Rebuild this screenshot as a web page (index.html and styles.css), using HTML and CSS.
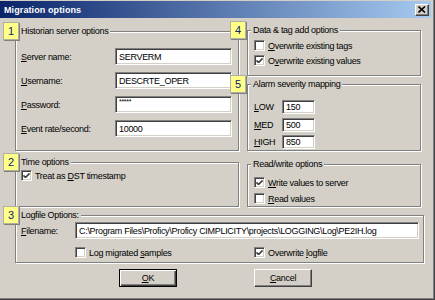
FILE: index.html
```html
<!DOCTYPE html>
<html lang="en">
<head>
    <meta charset="UTF-8">
    <title>Migration options</title>
    <link rel="stylesheet" href="styles.css">
</head>
<body>
    <div class="window">
        <div class="titlebar">
            <span class="title">Migration options</span>
            <span class="close">
                <svg width="8" height="7" viewBox="0 0 8 7"><path d="M0.5 0.5 L7 6.5 M7 0.5 L0.5 6.5" stroke="#000" stroke-width="1.6" fill="none"/></svg>
            </span>
        </div>

        <div class="client">
            <div class="columns">
                <div class="col">
                    <div class="group g-server">
                        <span class="badge">1</span>
                        <span class="legend">Historian server options</span>
                        <div class="fields">
                            <div class="row"><label><u>S</u>erver name:</label><span class="edit edit-wide">SERVERM</span></div>
                            <div class="row"><label><u>U</u>sername:</label><span class="edit edit-wide">DESCRTE_OPER</span></div>
                            <div class="row"><label><u>P</u>assword:</label><span class="edit edit-wide"><span class="mask">*****</span></span></div>
                            <div class="row"><label><u>E</u>vent rate/second:</label><span class="edit edit-wide">10000</span></div>
                        </div>
                    </div>
                    <div class="group g-time">
                        <span class="badge">2</span>
                        <span class="legend">Time options</span>
                        <div class="checks">
                            <div class="check-row"><span class="cb"><svg width="7" height="7" viewBox="0 0 7 7"><path d="M0.5 3 L2.5 5 L6.5 1 M0.5 4 L2.5 6 L6.5 2" stroke="#000" fill="none"/></svg></span><span>Treat as <u>D</u>ST timestamp</span></div>
                        </div>
                    </div>
                </div>

                <div class="col col-right">
                    <div class="group g-tags">
                        <span class="badge badge-r">4</span>
                        <span class="legend">Data &amp; tag add options</span>
                        <div class="checks checks-tags">
                            <div class="check-row"><span class="cb"></span><span><u>O</u>verwrite existing tags</span></div>
                            <div class="check-row"><span class="cb"><svg width="7" height="7" viewBox="0 0 7 7"><path d="M0.5 3 L2.5 5 L6.5 1 M0.5 4 L2.5 6 L6.5 2" stroke="#000" fill="none"/></svg></span><span>O<u>v</u>erwrite existing values</span></div>
                        </div>
                    </div>
                    <div class="group g-alarm">
                        <span class="badge badge-r">5</span>
                        <span class="legend">Alarm severity mapping</span>
                        <div class="levels">
                            <div class="row"><label class="lvl"><u>L</u>OW</label><span class="edit edit-small">150</span></div>
                            <div class="row"><label class="lvl"><u>M</u>ED</label><span class="edit edit-small">500</span></div>
                            <div class="row"><label class="lvl"><u>H</u>IGH</label><span class="edit edit-small">850</span></div>
                        </div>
                    </div>
                    <div class="group g-rw">
                        <span class="legend">Read/write options</span>
                        <div class="checks checks-rw">
                            <div class="check-row"><span class="cb"><svg width="7" height="7" viewBox="0 0 7 7"><path d="M0.5 3 L2.5 5 L6.5 1 M0.5 4 L2.5 6 L6.5 2" stroke="#000" fill="none"/></svg></span><span><u>W</u>rite values to server</span></div>
                            <div class="check-row"><span class="cb"></span><span><u>R</u>ead values</span></div>
                        </div>
                    </div>
                </div>
            </div>

            <div class="group g-log">
                <span class="badge">3</span>
                <span class="legend">Logfile Options:</span>
                <div class="log-body">
                    <div class="row"><label class="file-label"><u>F</u>ilename:</label><span class="edit edit-path">C:\Program Files\Proficy\Proficy CIMPLICITY\projects\LOGGING\Log\PE2IH.log</span></div>
                    <div class="log-checks">
                        <div class="check-row check-first"><span class="cb"></span><span>Log migrated <u>s</u>amples</span></div>
                        <div class="check-row"><span class="cb"><svg width="7" height="7" viewBox="0 0 7 7"><path d="M0.5 3 L2.5 5 L6.5 1 M0.5 4 L2.5 6 L6.5 2" stroke="#000" fill="none"/></svg></span><span>Overwrite <u>l</u>ogfile</span></div>
                    </div>
                </div>
            </div>

            <div class="buttons">
                <button class="btn btn-default"><u>O</u>K</button>
                <button class="btn"><u>C</u>ancel</button>
            </div>
        </div>
    </div>
</body>
</html>
```

FILE: styles.css
```css
body {
    margin: 0;
    background: #d4d0c8;
    font-family: "Liberation Sans", Arial, sans-serif;
    font-size: 9px;
    letter-spacing: -0.3px;
    color: #000;
}

.window {
    width: 435px;
    height: 300px;
    box-sizing: border-box;
    padding-top: 1px;
    border-right: 1px solid #404040;
    border-bottom: 1px solid #404040;
    box-shadow: inset -1px -1px 0 #808080;
    overflow: hidden;
}

.titlebar {
    height: 17px;
    margin-right: 3px;
    padding: 0 2px 0 4px;
    display: flex;
    align-items: center;
    justify-content: space-between;
    background: linear-gradient(to right, #0a246a, #a6caf0);
}

.title {
    color: #fff;
    font-weight: bold;
    font-size: 9px;
    letter-spacing: 0.1px;
}

.close {
    width: 14px;
    height: 12px;
    box-sizing: border-box;
    display: flex;
    align-items: center;
    justify-content: center;
    background: #d4d0c8;
    border: 1px solid;
    border-color: #fff #404040 #404040 #fff;
    box-shadow: inset -1px -1px 0 #808080;
}

.client {
    padding: 13px 0 0 15px;
}

.columns {
    display: grid;
    grid-template-columns: 224px 174px;
    column-gap: 8px;
    align-items: start;
}

.col {
    display: flex;
    flex-direction: column;
}

.col-right {
    margin-top: -1px;
}

/* etched group frame */
.group {
    position: relative;
    box-sizing: border-box;
    border: 1px solid #808080;
    box-shadow: inset 1px 1px 0 #fff, 1px 1px 0 #fff;
}

.legend {
    display: block;
    width: fit-content;
    margin: -7px 0 0 3px;
    padding: 0 2px;
    line-height: 12px;
    background: #d4d0c8;
}

.badge {
    position: absolute;
    top: -10px;
    left: -13px;
    width: 16px;
    height: 18px;
    box-sizing: border-box;
    display: flex;
    align-items: center;
    justify-content: center;
    background: #ffff88;
    border: 1px solid #b0b0a0;
    box-shadow: 1px 1px 0 #808080;
    color: #0a246a;
    font-size: 11px;
    letter-spacing: 0;
}

.badge-r {
    left: -18px;
}

.g-server { height: 120px; }
.g-time { height: 45px; margin-top: 11px; }
.g-tags { height: 46px; }
.g-alarm { height: 67px; margin-top: 8px; }
.g-rw { height: 43px; margin-top: 13px; }
.g-log { width: 409px; height: 48px; margin-top: 8px; }

.row {
    display: flex;
    align-items: center;
}

.fields {
    display: flex;
    flex-direction: column;
    gap: 7px;
    padding: 11px 0 0 5px;
}

.fields label {
    width: 94px;
}

.edit {
    box-sizing: border-box;
    height: 17px;
    padding: 0 3px;
    display: flex;
    align-items: center;
    background: #fff;
    border: 1px solid;
    border-color: #808080 #fff #fff #808080;
    box-shadow: inset 1px 1px 0 #404040, inset -1px -1px 0 #d4d0c8;
    white-space: nowrap;
    overflow: hidden;
}

.edit-wide { width: 117px; }

.mask {
    align-self: flex-start;
    font-size: 7px;
    line-height: 9px;
}

.checks {
    display: flex;
    flex-direction: column;
    padding: 1px 0 0 5px;
}

.checks-tags {
    padding: 3px 0 0 6px;
    gap: 2px;
}

.checks-rw {
    padding: 6px 0 0 6px;
    gap: 3px;
}

.check-row {
    display: flex;
    align-items: center;
    gap: 3px;
    height: 13px;
    white-space: nowrap;
}

.cb {
    width: 11px;
    height: 11px;
    box-sizing: border-box;
    flex: none;
    display: flex;
    align-items: center;
    justify-content: center;
    background: #fff;
    border: 1px solid;
    border-color: #808080 #fff #fff #808080;
    box-shadow: inset 1px 1px 0 #404040, inset -1px -1px 0 #d4d0c8;
}

.levels {
    display: flex;
    flex-direction: column;
    gap: 3.5px;
    padding: 10px 0 0 6px;
}

.lvl {
    width: 28px;
}

.edit-small {
    width: 33px;
    height: 14px;
}

.log-body {
    padding: 1px 0 0 5px;
}

.file-label {
    width: 54px;
}

.edit-path {
    width: 344px;
}

.log-checks {
    display: flex;
    margin-top: 7px;
    padding-left: 54px;
}

.check-first {
    width: 179px;
}

.buttons {
    display: flex;
    gap: 77px;
    margin-top: 6px;
    padding-left: 104px;
}

.btn {
    width: 58px;
    height: 18px;
    box-sizing: border-box;
    padding: 0;
    background: #d4d0c8;
    border: 1px solid;
    border-color: #fff #404040 #404040 #fff;
    box-shadow: inset -1px -1px 0 #808080;
    font-family: inherit;
    font-size: 9px;
    letter-spacing: -0.3px;
    color: #000;
}

.btn-default {
    border-color: #000;
    box-shadow: inset 1px 1px 0 #fff, inset -1px -1px 0 #404040, inset -2px -2px 0 #808080;
}
```
